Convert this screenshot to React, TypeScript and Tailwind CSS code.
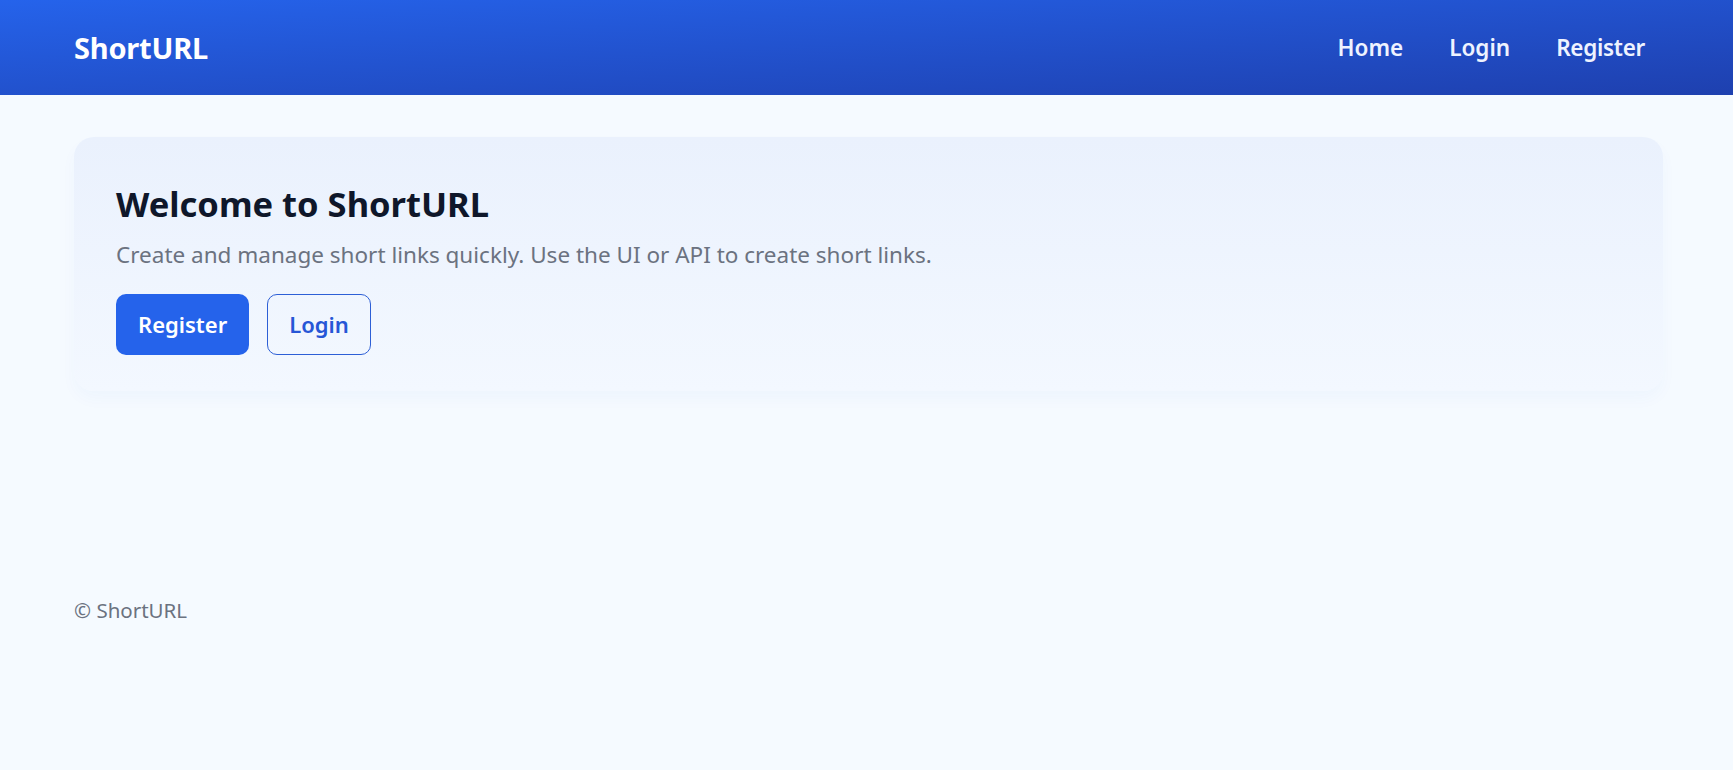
import React from "react";

const font = { fontFamily: '"Noto Sans", "Open Sans", Arial, sans-serif' };

function Header() {
  return (
    <header className="h-[95px] bg-gradient-to-br from-[#2563eb] to-[#1e40af]">
      <div className="ml-[74px] mr-[70px] flex h-full items-center">
        <a className="text-[29px] font-bold tracking-[-0.2px] text-white">ShortURL</a>
        <nav className="ml-auto mr-[18px] flex items-center gap-[46px] text-[22.5px] font-semibold text-[#eef3ff]">
          <a>Home</a>
          <a>Login</a>
          <a className="tracking-[-0.3px]">Register</a>
        </nav>
      </div>
    </header>
  );
}

function Hero() {
  return (
    <section className="rounded-[20px] bg-gradient-to-b from-[#eaf1fd] to-[#f3f8ff] px-[42px] pb-[36px] pt-[46px] shadow-[0_8px_16px_rgba(37,99,235,0.03)]">
      <h1 className="text-[34.5px] font-bold leading-[1.2] text-[#0f172a]">Welcome to ShortURL</h1>
      <p className="mt-[15px] text-[22.5px] leading-[1.4] text-[#6b7280]">
        Create and manage short links quickly. Use the UI or API to create short links.
      </p>
      <div className="mt-[23px] flex gap-[18px]">
        <button className="h-[61px] rounded-[10px] bg-[#2563eb] px-[22px] text-[22px] font-semibold text-white">
          Register
        </button>
        <button className="h-[61px] rounded-[10px] border border-[#2d5fd6] px-[21px] text-[22px] font-semibold text-[#2656d6]">
          Login
        </button>
      </div>
    </section>
  );
}

export default function App() {
  return (
    <div className="min-h-[770px] bg-[#f5faff]" style={font}>
      <Header />
      <main className="ml-[74px] mr-[70px] pt-[42px]">
        <Hero />
      </main>
      <footer className="ml-[74px] mr-[70px] mt-[204px] text-[20.5px] text-[#6b7280]">© ShortURL</footer>
    </div>
  );
}
